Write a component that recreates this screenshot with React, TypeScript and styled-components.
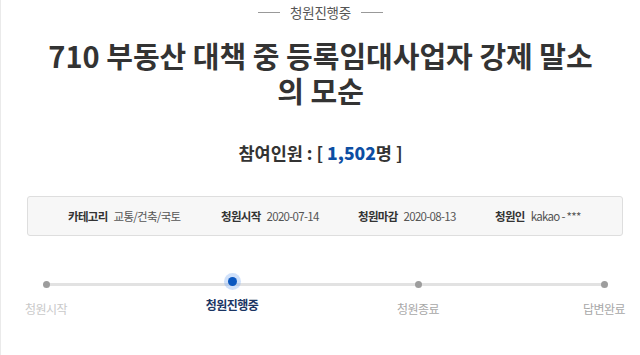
import React from 'react'
import styled, { createGlobalStyle } from 'styled-components'

const GlobalStyle = createGlobalStyle`
  html, body {
    margin: 0;
    padding: 0;
    background: #fff;
  }
  body {
    font-family: "Noto Sans CJK KR", "Noto Sans", sans-serif;
    color: #333;
  }
`

const Page = styled.div`
  width: 639px;
  height: 355px;
  border-left: 1px solid #eaeaea;
  overflow: hidden;
`

const Status = styled.div`
  display: flex;
  align-items: center;
  justify-content: center;
  gap: 10px;
  height: 24px;
  font-size: 13.5px;
  color: #555;
  letter-spacing: -0.2px;

  &::before,
  &::after {
    content: '';
    width: 22px;
    height: 1px;
    background: #999;
  }
`

const Title = styled.h1`
  margin: 14px auto 0;
  width: 552px;
  text-align: center;
  font-size: 29px;
  line-height: 35px;
  font-weight: 700;
  color: #333;
`

const Count = styled.div`
  margin-top: 32px;
  text-align: center;
  font-size: 17.5px;
  font-weight: 700;
  color: #333;

  strong {
    color: #0d4ea3;
  }
`

const InfoBox = styled.ul`
  list-style: none;
  margin: 31px 17px 0 26px;
  padding: 0 0 0 40px;
  height: 38px;
  display: flex;
  align-items: center;
  background: #f7f7f7;
  border: 1px solid #dedede;
  border-radius: 3px;
`

const InfoItem = styled.li<{ $w: number }>`
  width: ${p => p.$w}px;
  display: flex;
  align-items: center;
  gap: 6px;
  font-size: 11.5px;
  letter-spacing: -0.7px;
  color: #555;

  b {
    font-weight: 700;
    color: #333;
  }
`

const Track = styled.div`
  position: relative;
  margin: 38px 0 0;
  height: 60px;

  &::before {
    content: '';
    position: absolute;
    left: 45px;
    right: 36px;
    top: 9px;
    height: 3px;
    background: #e2e2e2;
  }
`

const Steps = styled.div`
  position: relative;
  display: flex;
  justify-content: space-between;
  padding: 0 36px 0 45px;
`

const Step = styled.div`
  width: 0;
  display: flex;
  flex-direction: column;
  align-items: center;
`

const Dot = styled.span<{ $active?: boolean }>`
  margin-top: ${p => (p.$active ? 3 : 7)}px;
  width: ${p => (p.$active ? 9 : 7)}px;
  height: ${p => (p.$active ? 9 : 7)}px;
  border-radius: 50%;
  background: ${p => (p.$active ? '#0b58c0' : '#9d9d9d')};
  box-shadow: ${p => (p.$active ? '0 0 0 4px rgba(120, 170, 240, 0.35)' : 'none')};
`

const Label = styled.span<{ $tone: 'past' | 'active' | 'future' }>`
  margin-top: ${p => (p.$tone === 'active' ? 10 : 12)}px;
  white-space: nowrap;
  font-size: 12px;
  letter-spacing: -0.5px;
  font-weight: ${p => (p.$tone === 'active' ? 700 : 400)};
  color: ${p =>
    p.$tone === 'active' ? '#1b3563' : p.$tone === 'past' ? '#c9c9c9' : '#a8a8a8'};
`

const steps: { label: string; tone: 'past' | 'active' | 'future' }[] = [
  { label: '청원시작', tone: 'past' },
  { label: '청원진행중', tone: 'active' },
  { label: '청원종료', tone: 'future' },
  { label: '답변완료', tone: 'future' },
]

export default function App() {
  return (
    <>
      <GlobalStyle />
      <Page>
        <Status>청원진행중</Status>
        <Title>710 부동산 대책 중 등록임대사업자 강제 말소의 모순</Title>
        <Count>
          참여인원 : [ <strong>1,502</strong>명 ]
        </Count>
        <InfoBox>
          <InfoItem $w={153}>
            <b>카테고리</b>교통/건축/국토
          </InfoItem>
          <InfoItem $w={137}>
            <b>청원시작</b>2020-07-14
          </InfoItem>
          <InfoItem $w={137}>
            <b>청원마감</b>2020-08-13
          </InfoItem>
          <InfoItem $w={120}>
            <b>청원인</b>kakao - ***
          </InfoItem>
        </InfoBox>
        <Track>
          <Steps>
            {steps.map(s => (
              <Step key={s.label}>
                <Dot $active={s.tone === 'active'} />
                <Label $tone={s.tone}>{s.label}</Label>
              </Step>
            ))}
          </Steps>
        </Track>
      </Page>
    </>
  )
}
